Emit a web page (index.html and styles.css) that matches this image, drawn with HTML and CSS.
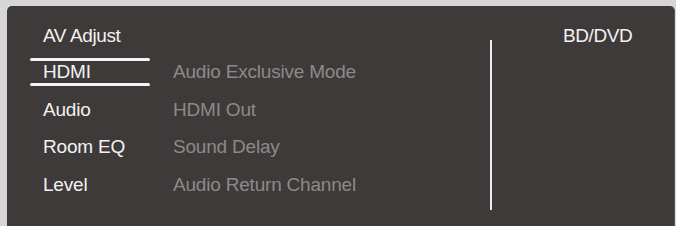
FILE: index.html
```html
<!DOCTYPE html>
<html lang="en">
<head>
    <meta charset="UTF-8">
    <title>AV Adjust</title>
    <link rel="stylesheet" href="styles.css">
</head>
<body>

<div class="panel">
    <div class="main">
        <div class="title">AV Adjust</div>

        <div class="menu">
            <div class="row active">
                <div class="label">
                    <span class="line"></span>
                    <span class="text">HDMI</span>
                    <span class="line"></span>
                </div>
                <div class="value">Audio Exclusive Mode</div>
            </div>
            <div class="row">
                <div class="label"><span class="text">Audio</span></div>
                <div class="value">HDMI Out</div>
            </div>
            <div class="row">
                <div class="label"><span class="text">Room EQ</span></div>
                <div class="value">Sound Delay</div>
            </div>
            <div class="row">
                <div class="label"><span class="text">Level</span></div>
                <div class="value">Audio Return Channel</div>
            </div>
        </div>
    </div>

    <div class="divider"></div>

    <div class="side">
        <div class="source">BD/DVD</div>
    </div>
</div>

</body>
</html>
```

FILE: styles.css
```css
body {
    margin: 0;
    padding: 0;
    height: 226px;
    background-color: #d6d6d6;
    font-family: "Liberation Sans", Arial, sans-serif;
    overflow: hidden;
}

.panel {
    display: flex;
    margin: 6px 0 0 7px;
    width: 668px;
    height: 230px;
    background-color: #3e3a39;
    border-radius: 5px 5px 0 0;
    box-sizing: border-box;
    border-right: 1px solid #5a5756;
}

.main {
    width: 483px;
    padding-top: 19px;
}

.title,
.source {
    font-size: 19px;
    line-height: 22px;
    letter-spacing: -0.4px;
    color: #f2f2f2;
}

.title {
    padding-left: 36px;
}

.menu {
    display: flex;
    flex-direction: column;
    gap: 11.5px;
    margin-top: 12px;
}

.row {
    display: flex;
    align-items: center;
    height: 26px;
    font-size: 19px;
    letter-spacing: -0.2px;
}

.label {
    display: flex;
    flex-direction: column;
    justify-content: center;
    width: 120px;
    height: 28px;
    margin-left: 23px;
    color: #f2f2f2;
}

.label .text {
    padding-left: 13px;
    line-height: 22px;
}

.line {
    display: block;
    height: 3px;
    background-color: #f4f4f4;
    border-radius: 2px;
}

.value {
    margin-left: 23px;
    color: #8c8a89;
    line-height: 22px;
}

.divider {
    width: 2px;
    height: 170px;
    margin-top: 34px;
    background-color: #ececec;
}

.side {
    padding: 19px 0 0 71px;
}
```
